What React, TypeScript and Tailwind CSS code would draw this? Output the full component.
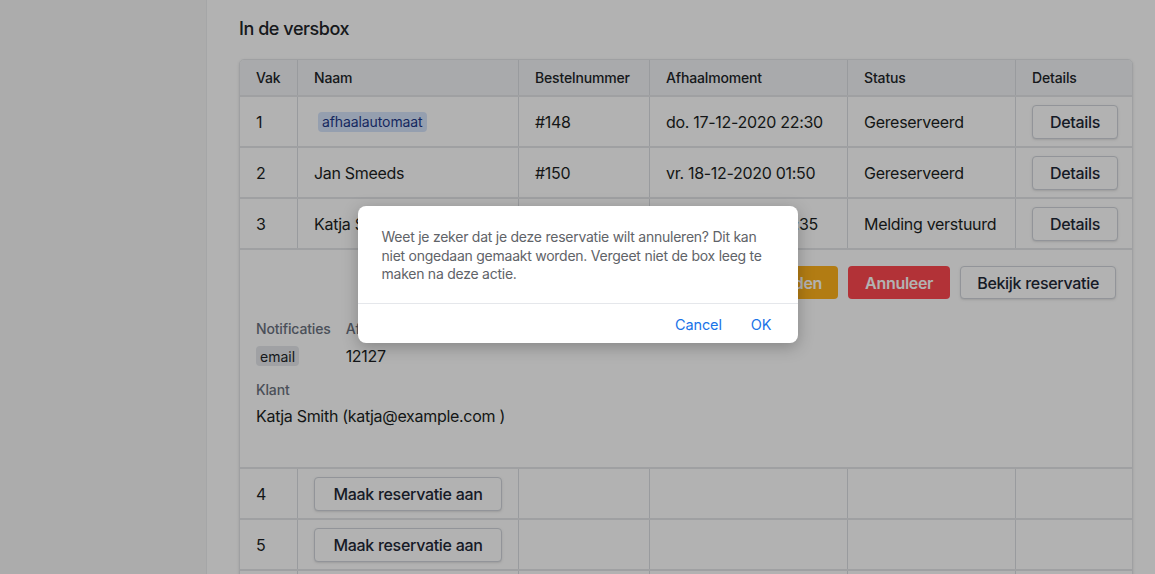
import React from "react";

const cols = "grid grid-cols-[58px_221px_131px_198px_168px_118px]";
const cell =
  "flex items-center px-4 border-r border-[#dcdee2] text-[16px] tracking-[-0.3px] whitespace-nowrap text-[#1c1f23]";
const cellLast = "flex items-center px-4 text-[16px] tracking-[-0.3px] whitespace-nowrap text-[#1c1f23]";
const btn =
  "h-[34px] px-[17px] rounded-[4px] border border-[#d1d5db] bg-white text-[16px] tracking-[-0.3px] whitespace-nowrap font-medium text-[#1f2937] shadow-sm";

function Row({
  vak,
  naam,
  nr,
  moment,
  status,
}: {
  vak: string;
  naam: React.ReactNode;
  nr: string;
  moment: string;
  status: string;
}) {
  return (
    <div className={`${cols} h-[51px] border-b-2 border-[#e4e6e9]`}>
      <div className={cell}>{vak}</div>
      <div className={cell}>{naam}</div>
      <div className={cell}>{nr}</div>
      <div className={cell}>{moment}</div>
      <div className={cell}>{status}</div>
      <div className={cellLast}>
        <button className={btn}>Details</button>
      </div>
    </div>
  );
}

function EmptyRow({ vak }: { vak: string }) {
  return (
    <div className={`${cols} h-[51px] border-b-2 border-[#e4e6e9]`}>
      <div className={cell}>{vak}</div>
      <div className={cell}>
        <button className={`${btn} w-[188px] px-0`}>Maak reservatie aan</button>
      </div>
      <div className={cell}></div>
      <div className={cell}></div>
      <div className={cell}></div>
      <div className={cellLast}></div>
    </div>
  );
}

export default function App() {
  return (
    <div
      className="relative flex h-[574px] overflow-hidden bg-white"
      style={{ fontFamily: "Inter, 'Noto Sans', sans-serif" }}
    >
      <aside className="w-[207px] shrink-0 bg-[#f6f6f7] border-r border-[#eceef0]" />
      <main className="flex-1 pl-8 pr-[22px] pt-[15px]">
        <h2 className="text-[18px] leading-[28px] font-medium tracking-[-0.45px] text-[#212529] mb-[16px]">
          In de versbox
        </h2>
        <div className="w-[894px] border border-[#e4e6e9] rounded-t-[5px] shadow-[0_1px_3px_rgba(0,0,0,0.12)] overflow-hidden">
          <div className={`${cols} h-[37px] bg-[#f3f4f6] border-b-2 border-[#e4e6e9]`}>
            {["Vak", "Naam", "Bestelnummer", "Afhaalmoment", "Status", "Details"].map((h, i) => (
              <div
                key={h}
                className={`flex items-center px-4 text-[14px] tracking-[-0.15px] font-medium text-[#212529] ${
                  i < 5 ? "border-r border-[#dcdee2]" : ""
                }`}
              >
                {h}
              </div>
            ))}
          </div>
          <Row
            vak="1"
            naam={
              <span className="ml-1 px-1 h-[20px] flex items-center rounded-[4px] bg-[#d6e4fb] text-[14px] tracking-[-0.1px] text-[#1e3a8a]">
                afhaalautomaat
              </span>
            }
            nr="#148"
            moment="do. 17-12-2020 22:30"
            status="Gereserveerd"
          />
          <Row vak="2" naam="Jan Smeeds" nr="#150" moment="vr. 18-12-2020 01:50" status="Gereserveerd" />
          <Row vak="3" naam="Katja Smith" nr="#149" moment="vr. 18-12-2020 23:35" status="Melding verstuurd" />
          <div className="h-[219px] border-b-2 border-[#e4e6e9] px-4 pt-4">
            <div className="flex justify-end gap-[10px]">
              <button className="h-[33px] px-4 rounded-[4px] bg-[#ffb21c] text-white text-[16px] tracking-[-0.3px] font-semibold whitespace-nowrap">
                Opnieuw melden
              </button>
              <button className="h-[33px] px-[17px] rounded-[4px] bg-[#ff4850] text-white text-[16px] tracking-[-0.3px] font-semibold whitespace-nowrap">
                Annuleer
              </button>
              <button className="h-[33px] px-4 rounded-[4px] border border-[#d1d5db] bg-white text-[16px] tracking-[-0.3px] font-medium text-[#1f2937] shadow-sm whitespace-nowrap">
                Bekijk reservatie
              </button>
            </div>
            <div className="mt-5 flex gap-[15px]">
              <div>
                <div className="text-[14px] leading-[20px] tracking-[-0.15px] font-medium text-[#6b7280]">
                  Notificaties
                </div>
                <div className="mt-[7px] h-[20px] flex items-center">
                  <span className="px-1 h-[20px] flex items-center rounded-[4px] bg-[#e5e7eb] text-[14px] text-[#212529]">
                    email
                  </span>
                </div>
              </div>
              <div>
                <div className="text-[14px] leading-[20px] tracking-[-0.15px] font-medium text-[#6b7280]">
                  Afhaalcode
                </div>
                <div className="mt-[5px] text-[16px] leading-[24px] tracking-[-0.3px] text-[#1c1f23]">12127</div>
              </div>
            </div>
            <div className="mt-[12px] text-[14px] leading-[20px] tracking-[-0.15px] font-medium text-[#6b7280]">
              Klant
            </div>
            <div className="mt-[4px] text-[16px] leading-[24px] tracking-[-0.3px] text-[#1c1f23]">
              Katja Smith (katja@example.com )
            </div>
          </div>
          <EmptyRow vak="4" />
          <EmptyRow vak="5" />
          <EmptyRow vak="6" />
        </div>
      </main>

      <div className="absolute inset-0 bg-black/30" />

      <div className="absolute left-1/2 top-[206px] -translate-x-1/2 w-[440px] rounded-[8px] bg-white shadow-[0_4px_16px_rgba(0,0,0,0.25)]">
        <p className="px-6 pt-[22px] pb-[19px] text-[14px] leading-[18.5px] tracking-[-0.25px] text-[#5f6368]">
          Weet je zeker dat je deze reservatie wilt annuleren? Dit kan niet ongedaan gemaakt worden. Vergeet niet de box
          leeg te maken na deze actie.
        </p>
        <div className="h-[40px] pt-[3px] border-t border-[#e5e7eb] flex items-center justify-end pr-[26px] gap-[29px] text-[14.5px] tracking-[-0.1px] text-[#1a73e8]">
          <span>Cancel</span>
          <span>OK</span>
        </div>
      </div>
    </div>
  );
}
